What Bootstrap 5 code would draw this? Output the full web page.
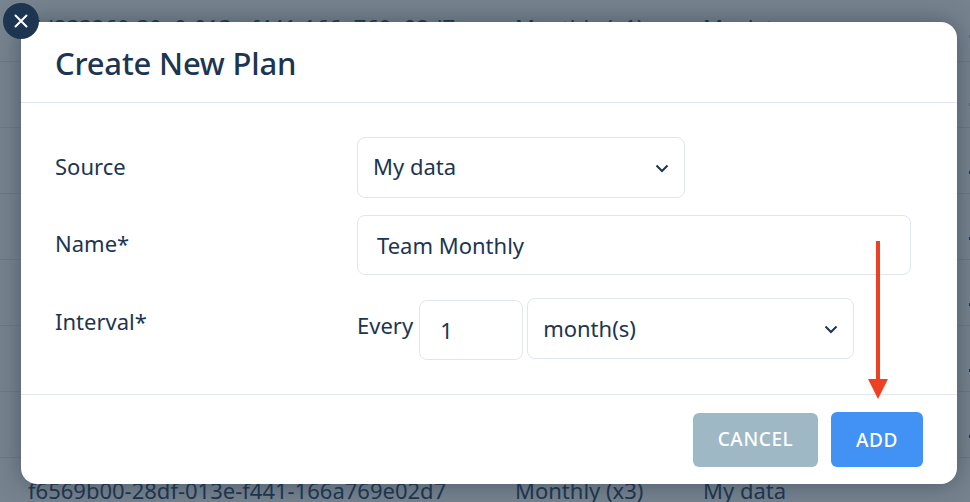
<!DOCTYPE html>
<html lang="en"><head><meta charset="utf-8"><title>Create New Plan</title>
<link href="https://cdn.jsdelivr.net/npm/bootstrap@5.3.0/dist/css/bootstrap.min.css" rel="stylesheet">
<style>
html,body{height:502px;overflow:hidden}
body{font-family:"Noto Sans",sans-serif;color:#1c3550;background:#77838f;position:relative;font-size:22px}
.bg-rows{padding-top:17px}
.bg-row{height:66px;border-bottom:1px solid #6d7986;display:flex;line-height:20px}
.bg-row:first-child{height:45px}
.bg-row span:nth-child(1){width:515px;padding-left:28px;white-space:nowrap}
.bg-row span:nth-child(2){width:188px}
.bg-mark{display:block;width:1px;height:3px;background:#1c3550;margin-left:auto;margin-top:43px}
.bg-mark-faint{opacity:.3;margin-top:18px}
.bg-mark-faint2{opacity:.3;margin-top:41px}
.bg-last{position:absolute;left:0;top:479px;display:flex;line-height:22px;white-space:nowrap}
.bg-last span:nth-child(1){width:515px;padding-left:28px}
.bg-last span:nth-child(2){width:188px}
.plan-dialog{position:absolute;left:21px;top:22px;width:936px;height:462px;background:#fff;border-radius:16px;box-shadow:0 0 24px rgba(40,55,70,.55);display:flex;flex-direction:column}
.plan-close{position:absolute;left:-18px;top:-19px;width:36px;height:36px;border-radius:50%;background:#1c3550;border:0;padding:0;display:flex;align-items:center;justify-content:center}
.plan-head{height:81px;border-bottom:1px solid #dfe6ee;padding:3px 34px 0;display:flex;align-items:center}
.plan-head h1{font-size:31px;font-weight:500;margin:0;letter-spacing:-.2px;color:#1c3550}
.plan-body{flex:1;padding:34px 46px 0 34px;display:flex;flex-direction:column}
.plan-row{display:flex}
.plan-row label{width:302px;flex:none;margin:0}
.plan-ctl{height:60px;border:1px solid #dfe6ee;border-radius:8px;background:#fff;display:flex;align-items:center;color:#1c3550;position:relative}
.plan-sel svg{position:absolute;right:15px;top:50%;margin-top:-4px}
.plan-foot{height:90px;border-top:1px solid #dfe6ee;display:flex;justify-content:flex-end;align-items:flex-start;padding:17px 34px 0 0;gap:13px}
.plan-btn{border:0;border-radius:6px;color:#fff;font-weight:500;font-size:19px;letter-spacing:.6px;height:55px;display:flex;align-items:center;justify-content:center}
.plan-cancel{width:125px;background:#9fb8c6;height:54px;padding-bottom:3px;margin-top:1px}
.plan-add{width:92px;background:#4291f5;padding-top:3px}
.plan-arrow{position:absolute;left:868px;top:241px}
.plan-srclbl{padding-bottom:3px}
.plan-src{width:328px;height:61px;padding-left:15px;padding-bottom:2px}
.plan-namerow{margin-top:17px}
.plan-namelbl{padding-top:12px}
.plan-name{width:554px;padding-left:19px}
.plan-introw{margin-top:23px}
.plan-intlbl{padding-top:7px}
.plan-every{margin-top:11px;margin-right:6px}
.plan-num{width:104px;padding-left:20px;margin-top:2px}
.plan-unit{width:327px;height:61px;margin-left:4px;padding-left:15px}
</style></head><body>
<div class="bg-rows">
<div class="bg-row"><span>7d233260-30e0-013e-f441-166a769e02d7</span><span>Monthly (x1)</span><span>My data</span><i class="bg-mark bg-mark-faint"></i></div>
<div class="bg-row"><i class="bg-mark bg-mark-faint2"></i></div>
<div class="bg-row"><i class="bg-mark"></i></div><div class="bg-row"><i class="bg-mark"></i></div><div class="bg-row"><i class="bg-mark"></i></div><div class="bg-row"><i class="bg-mark"></i></div><div class="bg-row"><i class="bg-mark"></i></div>
</div>
<div class="bg-last"><span>f6569b00-28df-013e-f441-166a769e02d7</span><span>Monthly (x3)</span><span>My data</span></div>
<div class="plan-dialog">
  <button class="plan-close" aria-label="Close"><svg width="14" height="14" viewBox="0 0 14 14"><path d="M1.5 1.5l11 11M12.5 1.5l-11 11" stroke="#fff" stroke-width="2" stroke-linecap="round"/></svg></button>
  <div class="plan-head"><h1>Create New Plan</h1></div>
  <div class="plan-body">
    <div class="plan-row align-items-center"><label class="plan-srclbl">Source</label>
      <div class="plan-ctl plan-sel plan-src">My data<svg width="14" height="9" viewBox="0 0 14 9"><path d="M1.5 1.5L7 7l5.5-5.5" fill="none" stroke="#1c3550" stroke-width="2"/></svg></div></div>
    <div class="plan-row align-items-start plan-namerow"><label class="plan-namelbl">Name*</label>
      <div class="plan-ctl plan-name">Team Monthly</div></div>
    <div class="plan-row align-items-start plan-introw"><label class="plan-intlbl">Interval*</label>
      <div class="d-flex align-items-start"><span class="plan-every">Every</span>
        <div class="plan-ctl plan-num">1</div>
        <div class="plan-ctl plan-sel plan-unit">month(s)<svg width="14" height="9" viewBox="0 0 14 9"><path d="M1.5 1.5L7 7l5.5-5.5" fill="none" stroke="#1c3550" stroke-width="2"/></svg></div>
      </div></div>
  </div>
  <div class="plan-foot">
    <button class="plan-btn plan-cancel">CANCEL</button>
    <button class="plan-btn plan-add">ADD</button>
  </div>
</div>
<svg class="plan-arrow" width="20" height="159" viewBox="0 0 20 159"><rect x="8" y="0" width="4" height="140" fill="#ee4023"/><path d="M0 138h20l-10 20z" fill="#ee4023"/></svg>
</body></html>
